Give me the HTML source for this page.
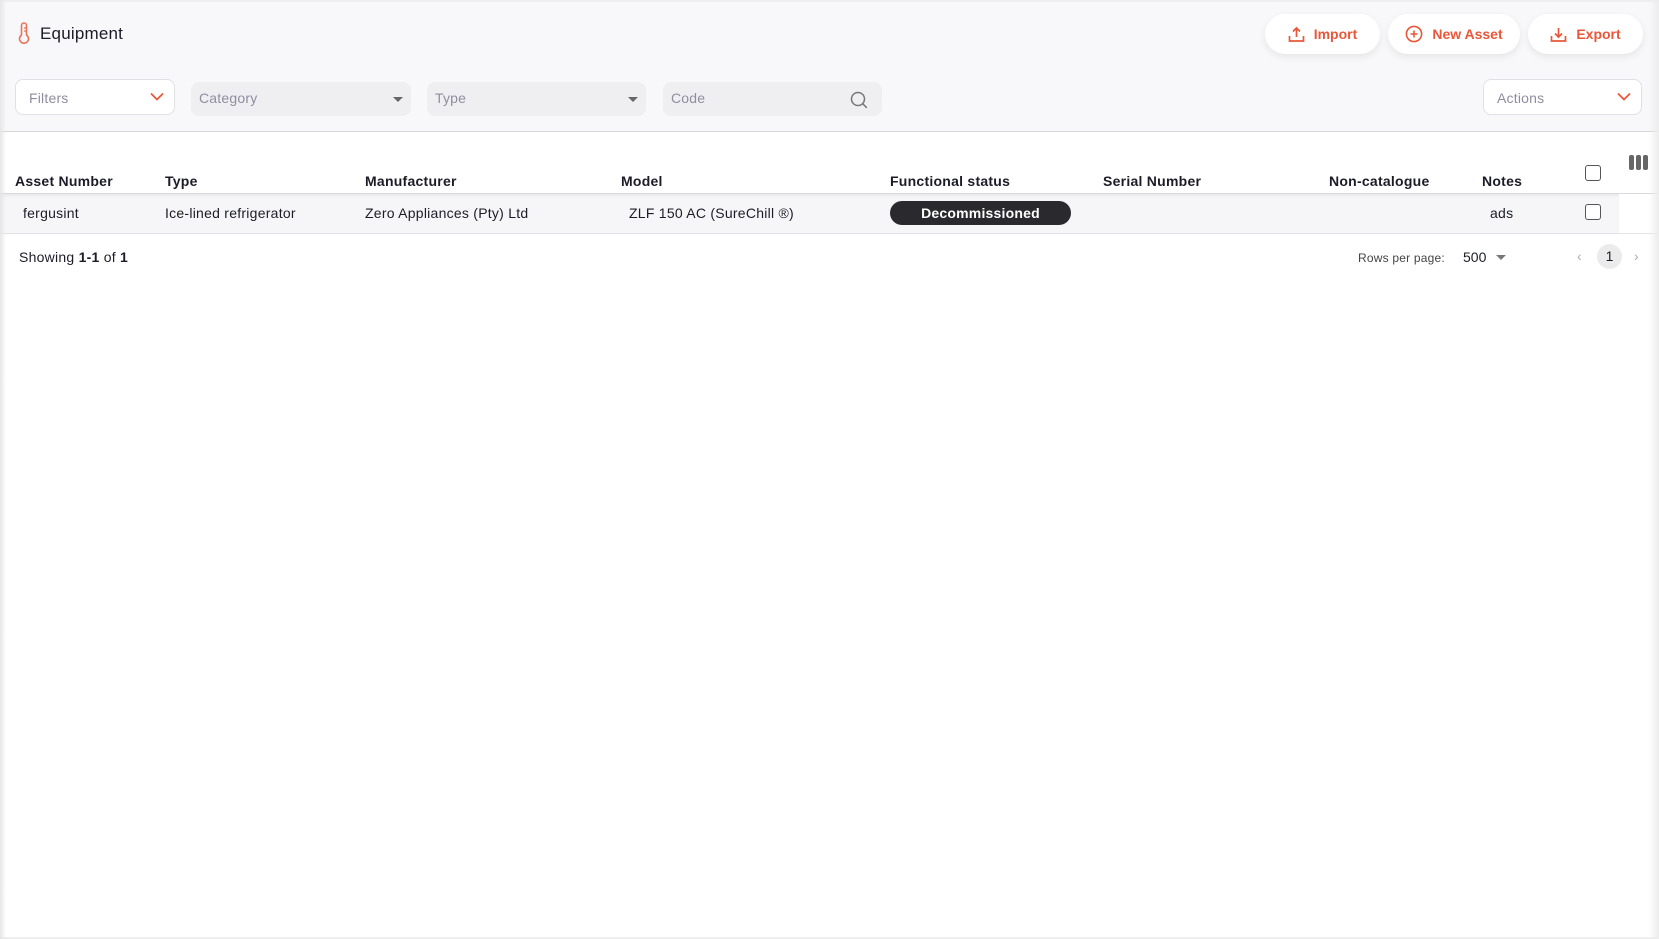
<!DOCTYPE html>
<html><head><meta charset="utf-8"><style>
*{box-sizing:border-box;margin:0;padding:0}
body{width:1659px;height:939px;overflow:hidden;background:#fff;font-family:"Liberation Sans",sans-serif;color:#1c1c28;position:relative;font-size:14px}
.abs{position:absolute}
.top{left:0;top:0;width:1659px;height:132px;background:#f8f8fa;border-top:2px solid #eeeef0;border-bottom:1px solid #d4d4da}
.btn{position:absolute;top:14px;height:40px;border-radius:20px;background:#fff;box-shadow:0 3px 8px rgba(0,0,0,.08);color:#e9573a;font-weight:bold;font-size:14px;display:flex;align-items:center;justify-content:center;gap:9px}
.sel{position:absolute;height:34px;border-radius:8px;background:#efeff2;color:#8e8ea0;font-size:14px;padding:8px 8px;letter-spacing:.2px}
.box{position:absolute;height:36px;border-radius:8px;background:#fff;border:1px solid #e0e0e6;color:#8e8ea0;font-size:14px;padding:10px 13px;letter-spacing:.2px}
.th{position:absolute;top:173px;font-weight:bold;font-size:14px;letter-spacing:.25px}
.td{position:absolute;top:205px;font-size:14px;letter-spacing:.25px}
.cb{position:absolute;width:16px;height:16px;border:1.3px solid #555;border-radius:3px;background:#fff}
</style></head><body>
<div class="abs" style="left:0;top:0;width:6px;height:939px;background:linear-gradient(90deg,#e6e6e6,rgba(255,255,255,0));z-index:5"></div>
<div class="abs" style="right:0;top:0;width:10px;height:939px;background:linear-gradient(270deg,#ececec,rgba(255,255,255,0));z-index:5"></div>
<div class="abs top"></div>
<svg class="abs" style="left:17px;top:22px" width="14" height="22" viewBox="0 0 14 22" fill="none" stroke="#e9735a" stroke-width="1.6"><path d="M4.5 13V3.5a2.5 2.5 0 0 1 5 0V13a4.5 4.5 0 1 1-5 0z"/><path d="M7 6h2M7 9h2" stroke-width="1.2"/></svg>
<div class="abs" style="left:40px;top:24px;font-size:17px;color:#1c1c28;letter-spacing:.2px">Equipment</div>

<div class="btn" style="left:1265px;width:115px"><svg width="17" height="17" viewBox="0 0 17 17" fill="none" stroke="#e9573a" stroke-width="1.7"><path d="M8.5 11V2M5 5.5l3.5-3.5 3.5 3.5M1.5 10v5h14v-5"/></svg>Import</div>
<div class="btn" style="left:1388px;width:132px"><svg width="18" height="18" viewBox="0 0 18 18" fill="none" stroke="#e9573a" stroke-width="1.6"><circle cx="9" cy="9" r="7.6"/><path d="M9 5.5v7M5.5 9h7"/></svg>New Asset</div>
<div class="btn" style="left:1528px;width:115px"><svg width="17" height="17" viewBox="0 0 17 17" fill="none" stroke="#e9573a" stroke-width="1.7"><path d="M8.5 2v9M5 7.5l3.5 3.5 3.5-3.5M1.5 10v5h14v-5"/></svg>Export</div>

<div class="box" style="left:15px;top:79px;width:160px">Filters<svg class="abs" style="right:10px;top:12px" width="14" height="9" viewBox="0 0 14 9" fill="none" stroke="#e9573a" stroke-width="1.8"><path d="M1 1.5l6 6 6-6"/></svg></div>
<div class="sel" style="left:191px;top:82px;width:220px">Category<div class="abs" style="right:8px;top:15px;border:5px solid transparent;border-top:5px solid #666;border-bottom:0"></div></div>
<div class="sel" style="left:427px;top:82px;width:219px">Type<div class="abs" style="right:8px;top:15px;border:5px solid transparent;border-top:5px solid #666;border-bottom:0"></div></div>
<div class="sel" style="left:663px;top:82px;width:219px">Code<svg class="abs" style="right:13px;top:8px" width="20" height="20" viewBox="0 0 20 20" fill="none" stroke="#777" stroke-width="1.5"><circle cx="9" cy="9" r="6.5"/><path d="M13.8 13.8l4 4"/></svg></div>
<div class="box" style="left:1483px;top:79px;width:159px">Actions<svg class="abs" style="right:10px;top:12px" width="14" height="9" viewBox="0 0 14 9" fill="none" stroke="#e9573a" stroke-width="1.8"><path d="M1 1.5l6 6 6-6"/></svg></div>

<div class="th" style="left:15px">Asset Number</div>
<div class="th" style="left:165px">Type</div>
<div class="th" style="left:365px">Manufacturer</div>
<div class="th" style="left:621px">Model</div>
<div class="th" style="left:890px">Functional status</div>
<div class="th" style="left:1103px">Serial Number</div>
<div class="th" style="left:1329px">Non-catalogue</div>
<div class="th" style="left:1482px">Notes</div>
<div class="cb" style="left:1585px;top:165px"></div>
<div class="abs" style="left:1629px;top:155px;width:5px;height:15px;background:#666;border-radius:2px"></div>
<div class="abs" style="left:1636px;top:155px;width:5px;height:15px;background:#666;border-radius:2px"></div>
<div class="abs" style="left:1643px;top:155px;width:5px;height:15px;background:#666;border-radius:2px"></div>

<div class="abs" style="left:0;top:193px;width:1659px;height:1px;background:#d8d8de"></div>
<div class="abs" style="left:0;top:194px;width:1619px;height:39px;background:#f6f6f8;box-shadow:inset 0 4px 5px -3px rgba(0,0,0,.08)"></div>
<div class="abs" style="left:0;top:233px;width:1659px;height:1px;background:#e4e4e8"></div>
<div class="td" style="left:23px">fergusint</div>
<div class="td" style="left:165px">Ice-lined refrigerator</div>
<div class="td" style="left:365px">Zero Appliances (Pty) Ltd</div>
<div class="td" style="left:629px">ZLF 150 AC (SureChill ®)</div>
<div class="abs" style="left:890px;top:201px;width:181px;height:24px;border-radius:12px;background:#2a2a2e;color:#fff;font-weight:bold;font-size:14px;text-align:center;line-height:24px;letter-spacing:.2px">Decommissioned</div>
<div class="td" style="left:1490px">ads</div>
<div class="cb" style="left:1585px;top:204px"></div>

<div class="abs" style="left:19px;top:249px;font-size:14px;letter-spacing:.25px">Showing <b>1-1</b> of <b>1</b></div>
<div class="abs" style="left:1358px;top:251px;font-size:12px;color:#444;letter-spacing:.2px">Rows per page:</div>
<div class="abs" style="left:1463px;top:249px;font-size:14px">500</div>
<div class="abs" style="left:1496px;top:255px;border:5px solid transparent;border-top:5px solid #777;border-bottom:0"></div>
<div class="abs" style="left:1577px;top:248px;font-size:14px;color:#aaa">‹</div>
<div class="abs" style="left:1597px;top:244px;width:25px;height:25px;border-radius:50%;background:#ebebeb;text-align:center;line-height:25px;font-size:14px">1</div>
<div class="abs" style="left:1634px;top:248px;font-size:14px;color:#aaa">›</div>
<div class="abs" style="left:0;top:937px;width:1659px;height:2px;background:#eee"></div>
</body></html>
